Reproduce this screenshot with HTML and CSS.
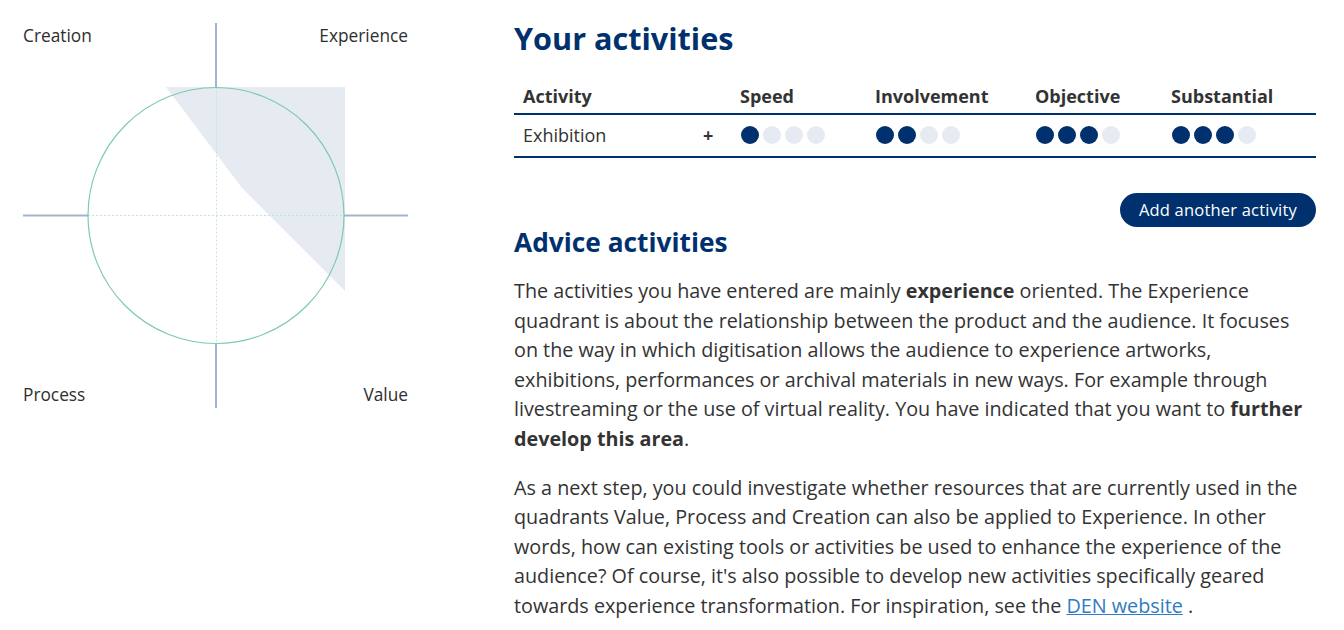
FILE: index.html
```html
<!DOCTYPE html>
<html lang="en">
<head>
<meta charset="utf-8">
<title>Your activities</title>
<link rel="stylesheet" href="styles.css">
</head>
<body>
<div class="page">
  <aside class="chart-col">
    <div class="chart">
      <svg class="chart-svg" width="385" height="385" viewBox="0 0 385 385" aria-hidden="true">
        <polygon points="143,64 322,64 322,268 219,165" fill="#e6eaf1"/>
        <line x1="193" y1="0" x2="193" y2="64.5" stroke="#a3b3cb" stroke-width="2"/>
        <line x1="193" y1="320.5" x2="193" y2="385" stroke="#a3b3cb" stroke-width="2"/>
        <line x1="0" y1="192.5" x2="65" y2="192.5" stroke="#a3b3cb" stroke-width="2"/>
        <line x1="321" y1="192.5" x2="385" y2="192.5" stroke="#a3b3cb" stroke-width="2"/>
        <line x1="193.5" y1="64.5" x2="193.5" y2="320.5" stroke="#bfe6d6" stroke-width="1" stroke-dasharray="2 2"/>
        <line x1="65" y1="192.5" x2="321" y2="192.5" stroke="#bfe6d6" stroke-width="1" stroke-dasharray="2 2"/>
        <circle cx="193" cy="192.5" r="128" fill="none" stroke="#7ccbb0" stroke-width="1.2"/>
      </svg>
      <span class="q q-tl">Creation</span>
      <span class="q q-tr">Experience</span>
      <span class="q q-bl">Process</span>
      <span class="q q-br">Value</span>
    </div>
  </aside>
  <main class="content">
    <h1 class="title">Your activities</h1>
    <div class="table">
      <div class="cell th">Activity</div>
      <div class="cell th"></div>
      <div class="cell th">Speed</div>
      <div class="cell th">Involvement</div>
      <div class="cell th">Objective</div>
      <div class="cell th">Substantial</div>

      <div class="cell td">Exhibition</div>
      <div class="cell td plus">+</div>
      <div class="cell td"><span class="dots"><i class="on"></i><i></i><i></i><i></i></span></div>
      <div class="cell td"><span class="dots"><i class="on"></i><i class="on"></i><i></i><i></i></span></div>
      <div class="cell td"><span class="dots"><i class="on"></i><i class="on"></i><i class="on"></i><i></i></span></div>
      <div class="cell td"><span class="dots"><i class="on"></i><i class="on"></i><i class="on"></i><i></i></span></div>
    </div>
    <div class="actions">
      <button class="btn" type="button">Add another activity</button>
    </div>
    <h2 class="subtitle">Advice activities</h2>
    <p class="text">The activities you have entered are mainly <strong>experience</strong> oriented. The Experience quadrant is about the relationship between the product and the audience. It focuses on the way in which digitisation allows the audience to experience artworks, exhibitions, performances or archival materials in new ways. For example through livestreaming or the use of virtual reality. You have indicated that you want to <strong>further develop this area</strong>.</p>
    <p class="text">As a next step, you could investigate whether resources that are currently used in the quadrants Value, Process and Creation can also be applied to Experience. In other words, how can existing tools or activities be used to enhance the experience of the audience? Of course, it's also possible to develop new activities specifically geared towards experience transformation. For inspiration, see the <a class="link" href="#">DEN website</a> .</p>
  </main>
</div>
</body>
</html>
```

FILE: styles.css
```css
* { box-sizing: border-box; }
html, body { margin: 0; padding: 0; background: #fff; }
body {
  font-family: "Open Sans", "Liberation Sans", sans-serif;
  color: #333;
  width: 1344px;
  height: 630px;
  overflow: hidden;
}
.page {
  display: flex;
  align-items: flex-start;
}
.chart-col {
  padding: 23px;
  width: 431px;
  flex: none;
}
.chart {
  position: relative;
  width: 385px;
  height: 385px;
}
.chart-svg { display: block; }
.q {
  position: absolute;
  font-size: 17.3px;
  line-height: 24px;
  color: #2e2e2e;
}
.q-tl { left: 0; top: 0.5px; }
.q-tr { right: 0; top: 0.5px; }
.q-bl { left: 0; bottom: 1.5px; }
.q-br { right: 0; bottom: 1.5px; }

.content {
  margin-left: 83px;
  width: 802px;
  padding-top: 18px;
  display: flex;
  flex-direction: column;
}
.title {
  margin: 0;
  font-size: 30.6px;
  line-height: 40px;
  font-weight: 700;
  color: #00316e;
}
.table {
  margin-top: 26px;
  display: grid;
  grid-template-columns: 180px 37px 135px 160px 136px 1fr;
}
.cell {
  padding: 0 9px;
  font-size: 18px;
  line-height: 24px;
}
.th {
  font-weight: 700;
  padding-bottom: 5px;
  border-bottom: 2px solid #00316e;
}
.td {
  padding-top: 8px;
  padding-bottom: 9px;
  border-bottom: 2px solid #00316e;
  display: flex;
  align-items: center;
}
.plus { font-weight: 700; }
.dots {
  display: flex;
  gap: 4px;
  padding-left: 1px;
}
.dots i {
  display: block;
  width: 18px;
  height: 18px;
  border-radius: 50%;
  background: #e6eaf2;
}
.dots i.on { background: #00316e; }

.actions {
  margin-top: 35px;
  display: flex;
  justify-content: flex-end;
}
.btn {
  font-family: "Open Sans", "Liberation Sans", sans-serif;
  font-size: 16.5px;
  font-weight: 500;
  line-height: 34px;
  height: 34px;
  padding: 0 19px;
  border: 0;
  border-radius: 17px;
  background: #00316e;
  color: #fff;
  letter-spacing: 0.2px;
}
.subtitle {
  margin: 1px 0 0;
  font-size: 26.3px;
  line-height: 28px;
  font-weight: 700;
  color: #00316e;
}
.text {
  margin: 20px 0 0;
  font-size: 19.75px;
  line-height: 29.5px;
}
.text + .text { margin-top: 19.5px; }
.text strong { font-weight: 700; }
.link {
  color: #2f7cc3;
  text-decoration: underline;
}
```
